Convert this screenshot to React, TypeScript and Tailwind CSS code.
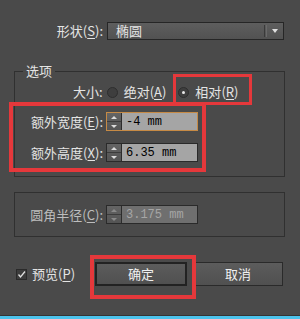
const cjk = "font-['Noto_Sans_CJK_SC','Noto_Sans',sans-serif]";

function Key({ k }: { k: string }) {
  return (
    <>
      (<u className="underline-offset-2">{k}</u>)
    </>
  );
}

function Arrows({ dim }: { dim?: boolean }) {
  const c = dim ? 'border-b-[#8a8a8a]' : 'border-b-[#dcdcdc]';
  const d = dim ? 'border-t-[#8a8a8a]' : 'border-t-[#dcdcdc]';
  return (
    <div className="flex w-[15px] flex-col border-r border-[#2c2c2c] bg-gradient-to-b from-[#646464] to-[#545454]">
      <div className="flex flex-1 items-center justify-center border-b border-[#3c3c3c]">
        <span className={`h-0 w-0 border-x-[3px] border-b-[3px] border-x-transparent ${c}`} />
      </div>
      <div className="flex flex-1 items-center justify-center">
        <span className={`h-0 w-0 border-x-[3px] border-t-[3px] border-x-transparent ${d}`} />
      </div>
    </div>
  );
}

function Spinner({ value, focused, disabled }: { value: string; focused?: boolean; disabled?: boolean }) {
  return (
    <div
      className={`flex h-[19px] w-[92px] border ${focused ? 'border-[#c68a45]' : 'border-[#2a2a2a]'}`}
    >
      <Arrows dim={disabled} />
      <div
        className={`flex flex-1 items-center pl-[4px] font-['Liberation_Mono',monospace] text-[12px] ${
          disabled ? 'bg-[#6f6f6f] text-[#a6a6a6]' : 'bg-[#a5a5a5] text-black'
        }`}
      >
        {value}
      </div>
    </div>
  );
}

function Row({ label, children, dim }: { label: React.ReactNode; children: React.ReactNode; dim?: boolean }) {
  return (
    <div className="flex items-center">
      <div className={`w-[77px] whitespace-nowrap text-right ${dim ? 'text-[#bdbdbd]' : ''}`}>{label}</div>
      <div className="ml-[3px]">{children}</div>
    </div>
  );
}

function Radio({ checked }: { checked?: boolean }) {
  return (
    <span className="flex h-[11px] w-[11px] items-center justify-center rounded-full border border-[#2e2e2e] bg-[#3e3e3e]">
      {checked && <span className="h-[3px] w-[3px] rounded-full bg-[#e8e8e8]" />}
    </span>
  );
}

export default function App() {
  return (
    <div className={`relative flex h-[319px] w-[300px] flex-col bg-[#4a4a4a] text-[13px] leading-[14px] text-[#e4e4e4] ${cjk}`}>
      {/* 形状 */}
      <div className="mt-[22px] flex items-center pl-[14px] pr-[16px]">
        <div className="w-[89px] text-right">
          形状<Key k="S" />:
        </div>
        <div className="ml-[4px] flex h-[18px] flex-1 items-center border border-[#262626] bg-gradient-to-b from-[#5e5e5e] to-[#525252]">
          <span className="flex-1 pl-[8px]">椭圆</span>
          <span className="h-[12px] w-px bg-[#3a3a3a]" />
          <span className="ml-px h-[12px] w-px bg-[#6a6a6a]" />
          <span className="mx-[5px] h-0 w-0 border-x-[3px] border-t-[4px] border-x-transparent border-t-[#e0e0e0]" />
        </div>
      </div>

      {/* 选项 */}
      <fieldset className="ml-[14px] mr-[15px] mt-[24px] border border-[#303030] pb-[14px]">
        <legend className="ml-[8px] px-[3px]">选项</legend>
        <div className="mt-[7px] flex items-center pl-[58px]">
          <span>大小:</span>
          <span className="ml-[4px]"><Radio /></span>
          <span className="ml-[6px]">
            绝对<Key k="A" />
          </span>
          <span className="ml-[12px]"><Radio checked /></span>
          <span className="ml-[6px]">
            相对<Key k="R" />
          </span>
        </div>
        <div className="mt-[13px] flex flex-col gap-[12px] pl-[11px]">
          <Row
            label={
              <>
                额外宽度<Key k="E" />:
              </>
            }
          >
            <Spinner value="-4 mm" focused />
          </Row>
          <Row
            label={
              <>
                额外高度<Key k="X" />:
              </>
            }
          >
            <Spinner value="6.35 mm" />
          </Row>
        </div>
      </fieldset>

      {/* 圆角半径 */}
      <div className="ml-[14px] mr-[15px] mt-[15px] flex h-[45px] items-center border border-[#303030] pl-[11px]">
        <Row
          dim
          label={
            <>
              圆角半径<Key k="C" />:
            </>
          }
        >
          <Spinner value="3.175 mm" disabled />
        </Row>
      </div>

      {/* buttons */}
      <div className="mt-[25px] flex items-center pl-[16px]">
        <span className="flex h-[11px] w-[11px] items-center justify-center border border-[#2a2a2a] bg-[#3c3c3c]">
          <svg width="9" height="9" viewBox="0 0 9 9">
            <path d="M1.5 4.5 L3.5 7 L8 1.5" fill="none" stroke="#e0e0e0" strokeWidth="1.3" />
          </svg>
        </span>
        <span className="ml-[5px]">
          预览<Key k="P" />
        </span>
        <button className="ml-[20px] flex h-[24px] w-[92px] items-center justify-center border-2 border-[#222] bg-gradient-to-b from-[#5c5c5c] to-[#505050] text-[#f0f0f0]">
          确定
        </button>
        <button className="ml-[6px] flex h-[24px] w-[90px] items-center justify-center border border-[#2a2a2a] bg-gradient-to-b from-[#5c5c5c] to-[#505050] text-[#f0f0f0]">
          取消
        </button>
      </div>

      <div className="mt-auto h-px bg-[#353535]" />
      <div className="h-[3px] bg-[#4cc3ec]" />

      {/* red annotation marks */}
      <div className="pointer-events-none absolute left-[173px] top-[74px] h-[31px] w-[79px] border-[3px] border-[#e5383b]" />
      <div className="pointer-events-none absolute left-[9px] top-[102px] h-[70px] w-[197px] border-[4px] border-[#e5383b]" />
      <div className="pointer-events-none absolute left-[90px] top-[255px] h-[44px] w-[106px] border-[4px] border-[#e5383b]" />
    </div>
  );
}
